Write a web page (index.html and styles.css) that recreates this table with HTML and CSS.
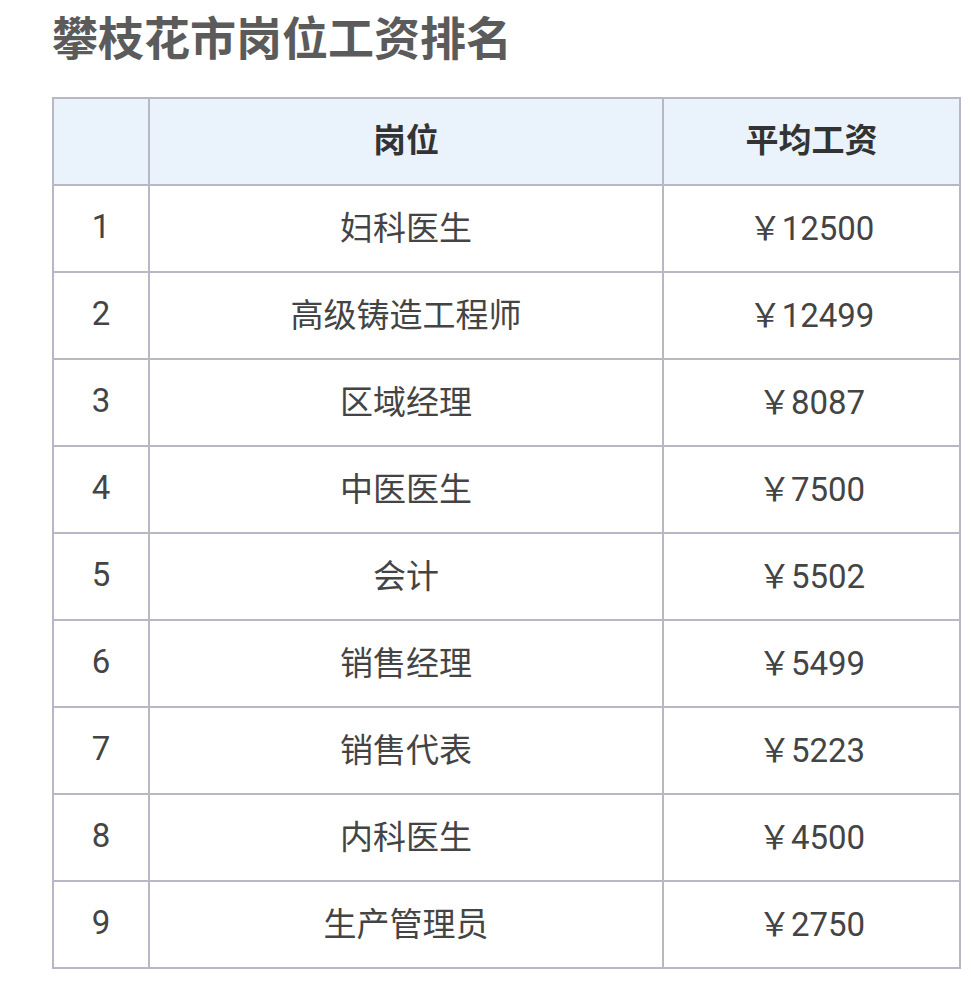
FILE: index.html
```html
<!DOCTYPE html>
<html lang="zh">
<head>
<meta charset="utf-8">
<link rel="stylesheet" href="styles.css">
</head>
<body>
<div class="page">
  <h1 class="title">攀枝花市岗位工资排名</h1>
  <table class="rank">
    <colgroup>
      <col class="c-idx">
      <col class="c-job">
      <col class="c-pay">
    </colgroup>
    <thead>
      <tr><th></th><th>岗位</th><th>平均工资</th></tr>
    </thead>
    <tbody>
      <tr><td>1</td><td>妇科医生</td><td>￥12500</td></tr>
      <tr><td>2</td><td>高级铸造工程师</td><td>￥12499</td></tr>
      <tr><td>3</td><td>区域经理</td><td>￥8087</td></tr>
      <tr><td>4</td><td>中医医生</td><td>￥7500</td></tr>
      <tr><td>5</td><td>会计</td><td>￥5502</td></tr>
      <tr><td>6</td><td>销售经理</td><td>￥5499</td></tr>
      <tr><td>7</td><td>销售代表</td><td>￥5223</td></tr>
      <tr><td>8</td><td>内科医生</td><td>￥4500</td></tr>
      <tr><td>9</td><td>生产管理员</td><td>￥2750</td></tr>
    </tbody>
  </table>
</div>
</body>
</html>
```
FILE: styles.css
```css
html, body {
  margin: 0;
  padding: 0;
  background: #ffffff;
}
.page {
  padding-left: 52px;
  font-family: "Roboto", "Noto Sans CJK SC", sans-serif;
}
.title {
  margin: 0 0 23px 0;
  height: 74px;
  line-height: 70px;
  font-size: 46px;
  font-weight: 700;
  color: #5b5b5b;
  font-family: "Noto Sans CJK SC", sans-serif;
}
.rank {
  border-collapse: collapse;
  width: 907px;
  table-layout: fixed;
}
.c-idx { width: 96px; }
.c-job { width: 514px; }
.c-pay { width: 297px; }
.rank th,
.rank td {
  border: 2px solid #b8b8c4;
  height: 80px;
  padding: 0 0 5px 0;
  text-align: center;
  vertical-align: middle;
  font-size: 33px;
  color: #444444;
  font-weight: 400;
}
.rank th {
  background: #eaf3fb;
  font-weight: 700;
  color: #333333;
  font-size: 33px;
  height: 77px;
  padding: 0 0 8px 0;
  font-family: "Noto Sans CJK SC", sans-serif;
}
```
